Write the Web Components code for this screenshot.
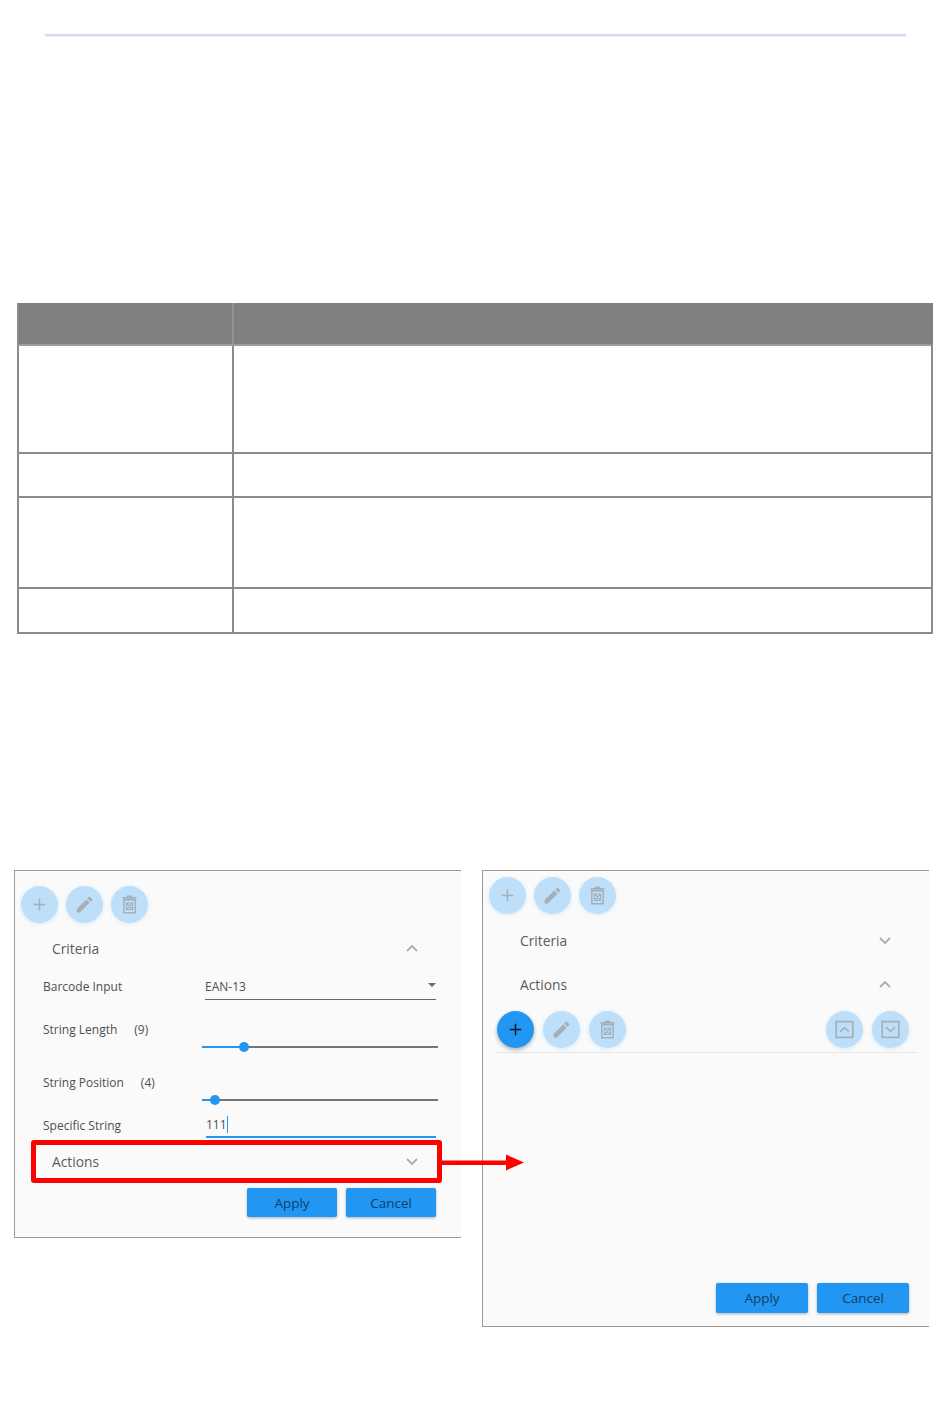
<!DOCTYPE html>
<html>
<head>
<meta charset="utf-8">
<style>
  html, body { margin: 0; background: #fff; }
  body { width: 950px; height: 1419px; overflow: hidden; font-family: "Open Sans", "Noto Sans", sans-serif; }
</style>
</head>
<body>
<page-rule></page-rule>
<spec-table rows="43,108,44,91,45"></spec-table>

<panel-gallery>
  <dialog-panel style="--panel-height: 367px; --panel-pad: 15px 25px 20px 6px">
    <icon-row>
      <round-button icon="plus"></round-button>
      <round-button icon="pencil"></round-button>
      <round-button icon="trash"></round-button>
    </icon-row>
    <section-header style="margin-top: 4px; --head-left: 31px; --chev-right: 18px" open>Criteria</section-header>
    <form-row label="Barcode Input"><select-field value="EAN-13"></select-field></form-row>
    <form-row label="String Length" note="(9)" tall><slider-bar value="17.8"></slider-bar></form-row>
    <form-row label="String Position" note="(4)" tall><slider-bar value="5.5"></slider-bar></form-row>
    <form-row label="Specific String" short><text-field value="111"></text-field></form-row>
    <section-header style="margin-top: 2px; --head-left: 31px; --chev-right: 18px">Actions</section-header>
    <button-bar style="margin-top: 5px; --btn-w: 90px; --btn-h: 29px">
      <action-button>Apply</action-button>
      <action-button>Cancel</action-button>
    </button-bar>
  </dialog-panel>

  <dialog-panel style="--panel-height: 456px; --panel-pad: 6px 20px 13px 6px">
    <icon-row>
      <round-button icon="plus"></round-button>
      <round-button icon="pencil"></round-button>
      <round-button icon="trash"></round-button>
    </icon-row>
    <section-header style="margin-top: 4px; --head-left: 31px; --chev-right: 18px">Criteria</section-header>
    <section-header style="--head-left: 31px; --chev-right: 18px" open>Actions</section-header>
    <action-toolbar>
      <round-button icon="plus" active></round-button>
      <round-button icon="pencil"></round-button>
      <round-button icon="trash"></round-button>
      <round-button icon="up" slot="end"></round-button>
      <round-button icon="down" slot="end"></round-button>
    </action-toolbar>
    <button-bar style="margin-top: auto; --btn-w: 92px; --btn-h: 30px">
      <action-button>Apply</action-button>
      <action-button>Cancel</action-button>
    </button-bar>
  </dialog-panel>

  <callout-box slot="overlay"></callout-box>
</panel-gallery>

<script>
const icons = {
  plus: `<path d="M12 5.5v13M5.5 12h13" fill="none" stroke="currentColor" stroke-width="1.7"/>`,
  pencil: `<path fill="currentColor" d="M3 17.25V21h3.75L17.81 9.94l-3.75-3.75L3 17.25zM20.71 7.04a1 1 0 0 0 0-1.41l-2.34-2.34a1 1 0 0 0-1.41 0l-1.83 1.83 3.75 3.75 1.83-1.83z"/>`,
  trash: `<g fill="none" stroke="currentColor" stroke-width="1.6"><path d="M5.5 6.5h13v15h-13z"/><path d="M4 4.4h16" stroke-width="2"/><path d="M9 2.6h6"/><path d="M8.4 10.2h7.2v7.6H8.4zM8.6 10.4l6.8 7.2M15.4 10.400l-6.800 7.200" stroke-width="1.2"/></g>`,
  up: `<g fill="none" stroke="currentColor" stroke-width="1.9"><path d="M2.500 3h19v18h-19z"/><path d="M7 14.500l5-4.500 5 4.500"/></g>`,
  down: `<g fill="none" stroke="currentColor" stroke-width="1.9"><path d="M2.500 3h19v18h-19z"/><path d="M7 9.500l5 4.500 5-4.500"/></g>`,
};

class PageRule extends HTMLElement {
  constructor() {
    super();
    this.attachShadow({ mode: "open" }).innerHTML = `
      <style>
        :host { display: block; height: 2px; margin: 34px 44px 0 45px; background: #d3dcee; border-bottom: 1px solid #e8edf7; }
      </style>`;
  }
}

class SpecTable extends HTMLElement {
  connectedCallback() {
    const rows = this.getAttribute("rows").split(",");
    const cells = rows.map((h, i) => `
      <div class="cell ${i === 0 ? "head" : ""}" style="height:${h}px"></div>
      <div class="cell ${i === 0 ? "head" : ""}" style="height:${h}px"></div>`).join("");
    this.attachShadow({ mode: "open" }).innerHTML = `
      <style>
        :host { display: block; width: 917px; margin: 266px 0 0 17px; }
        .grid { display: grid; grid-template-columns: 217px 699px; }
        .cell { box-sizing: border-box; border-bottom: 2px solid #8b8b8b; border-right: 2px solid #8b8b8b; }
        .cell:nth-child(odd) { border-left: 2px solid #8b8b8b; }
        .head { background: #808080; border-color: #9c9c9c; border-left-color: #808080; border-right-color: #808080; }
        .head:nth-child(1) { border-right-color: #939393; }
      </style>
      <div class="grid">${cells}</div>`;
  }
}

class PanelGallery extends HTMLElement {
  constructor() {
    super();
    this.attachShadow({ mode: "open" }).innerHTML = `
      <style>
        :host { display: flex; gap: 21px; align-items: flex-start; position: relative; margin: 236px 0 0 14px; }
      </style>
      <slot></slot><slot name="overlay"></slot>`;
  }
}

class DialogPanel extends HTMLElement {
  constructor() {
    super();
    this.attachShadow({ mode: "open" }).innerHTML = `
      <style>
        :host {
          display: flex; flex-direction: column; box-sizing: border-box;
          width: 447px; height: calc(var(--panel-height) + 1px); padding: var(--panel-pad);
          background: #fafafa; border: 1px solid #9a9a9a; border-right: none;
          font-family: "Open Sans", "Noto Sans", sans-serif; color: #4f4f4f;
        }
      </style>
      <slot></slot>`;
  }
}

class IconRow extends HTMLElement {
  constructor() {
    super();
    this.attachShadow({ mode: "open" }).innerHTML = `
      <style>:host { display: flex; gap: 8px; }</style>
      <slot></slot>`;
  }
}

class RoundButton extends HTMLElement {
  connectedCallback() {
    const icon = this.getAttribute("icon");
    this.attachShadow({ mode: "open" }).innerHTML = `
      <style>
        :host {
          display: flex; align-items: center; justify-content: center; flex: none;
          width: 37px; height: 37px; border-radius: 50%;
          background: #bddffa; color: #a4afb8;
          box-shadow: 0 1px 4px rgba(33,150,243,.16);
        }
        :host([active]) { background: #2196f3; color: #0b1a28; box-shadow: 0 2px 4px rgba(0,0,0,.3); }
        svg { width: 21px; height: 21px; }
      </style>
      <svg viewBox="0 0 24 24">${icons[icon]}</svg>`;
  }
}

class SectionHeader extends HTMLElement {
  connectedCallback() {
    const points = this.hasAttribute("open") ? "1,7 6,2 11,7" : "1,2 6,7 11,2";
    this.attachShadow({ mode: "open" }).innerHTML = `
      <style>
        :host {
          display: flex; align-items: center; justify-content: space-between; box-sizing: border-box;
          height: 44px; padding: 0 var(--chev-right) 0 var(--head-left);
          font-size: 13.800px; color: #5a5a5a;
        }
        svg { width: 12px; height: 9px; }
      </style>
      <slot></slot>
      <svg viewBox="0 0 12 9"><polyline points="${points}" fill="none" stroke="#ababab" stroke-width="1.8"/></svg>`;
  }
}

class FormRow extends HTMLElement {
  connectedCallback() {
    const note = this.getAttribute("note");
    this.attachShadow({ mode: "open" }).innerHTML = `
      <style>
        :host {
          display: grid; grid-template-columns: 159px 236px; box-sizing: border-box;
          height: 38px; padding-left: 22px;
          font-size: 12px; color: #4f4f4f;
        }
        :host([tall]) { height: 54px; }
        :host([short]) { height: 21px; }
        .label { display: flex; gap: 17px; padding-top: 8px; line-height: 16px; height: 16px; white-space: nowrap; }
        :host([tall]) .label { padding-top: 13px; }
        :host([short]) .label { padding-top: 2px; }
      </style>
      <div class="label"><span>${this.getAttribute("label")}</span>${note ? `<span>${note}</span>` : ""}</div>
      <div class="control"><slot></slot></div>`;
  }
}

class SelectField extends HTMLElement {
  connectedCallback() {
    this.attachShadow({ mode: "open" }).innerHTML = `
      <style>
        :host {
          display: flex; justify-content: space-between; box-sizing: border-box;
          width: 231px; height: 21px; margin: 8px 0 0 3px; line-height: 16px;
          border-bottom: 1px solid #666; font-size: 12px; color: #4f4f4f;
        }
        i { width: 0; height: 0; margin: 4px 0 0; border: 4px solid transparent; border-top-color: #666; border-bottom: none; }
      </style>
      <span>${this.getAttribute("value")}</span><i></i>`;
  }
}

class SliderBar extends HTMLElement {
  connectedCallback() {
    const value = this.getAttribute("value");
    this.attachShadow({ mode: "open" }).innerHTML = `
      <style>
        :host { display: block; position: relative; height: 2px; margin-top: 37px; background: #757575; }
        .fill { height: 2px; background: #2196f3; width: ${value}%; }
        .thumb { position: absolute; left: ${value}%; top: -4px; width: 10px; height: 10px; margin-left: -5px; border-radius: 50%; background: #2196f3; }
      </style>
      <div class="fill"></div><div class="thumb"></div>`;
  }
}

class TextField extends HTMLElement {
  connectedCallback() {
    this.attachShadow({ mode: "open" }).innerHTML = `
      <style>
        :host {
          display: block; box-sizing: border-box; width: 230px; height: 22px; margin: 0 0 0 4px; padding-top: 1px; line-height: 16px;
          border-bottom: 2px solid #2196f3; font-size: 12px; color: #4f4f4f;
        }
        span { border-right: 1px solid #2196f3; }
      </style>
      <span>${this.getAttribute("value")}</span>`;
  }
}

class ActionToolbar extends HTMLElement {
  constructor() {
    super();
    this.attachShadow({ mode: "open" }).innerHTML = `
      <style>
        :host {
          display: flex; justify-content: space-between; box-sizing: border-box;
          margin: 5px 0 0 7px; width: 422px; height: 42px; padding: 0 9px 0 1px;
          border-bottom: 1px solid #e6e6e6;
        }
        .group { display: flex; gap: 9px; height: 37px; }
      </style>
      <div class="group"><slot></slot></div>
      <div class="group"><slot name="end"></slot></div>`;
  }
}

class ButtonBar extends HTMLElement {
  constructor() {
    super();
    this.attachShadow({ mode: "open" }).innerHTML = `
      <style>:host { display: flex; justify-content: flex-end; gap: 9px; }</style>
      <slot></slot>`;
  }
}

class ActionButton extends HTMLElement {
  constructor() {
    super();
    this.attachShadow({ mode: "open" }).innerHTML = `
      <style>
        :host {
          display: flex; align-items: center; justify-content: center;
          width: var(--btn-w); height: var(--btn-h); border-radius: 2px;
          background: #2196f3; color: #123e66; font-size: 13.500px;
          box-shadow: 0 1px 3px rgba(0,0,0,.3);
        }
      </style>
      <slot></slot>`;
  }
}

class CalloutBox extends HTMLElement {
  constructor() {
    super();
    this.attachShadow({ mode: "open" }).innerHTML = `
      <style>
        :host { position: absolute; left: 17px; top: 270px; display: block; }
        .box { box-sizing: border-box; width: 411px; height: 43px; border: 5px solid #f00; border-radius: 3px; }
        svg { position: absolute; left: 411px; top: 0; width: 83px; height: 43px; }
      </style>
      <div class="box"></div>
      <svg viewBox="0 0 83 43"><path d="M0 20.500h64v-6l18 8-18 8v-5.500H0z" fill="#f00"/></svg>`;
  }
}

customElements.define("page-rule", PageRule);
customElements.define("spec-table", SpecTable);
customElements.define("panel-gallery", PanelGallery);
customElements.define("dialog-panel", DialogPanel);
customElements.define("icon-row", IconRow);
customElements.define("round-button", RoundButton);
customElements.define("section-header", SectionHeader);
customElements.define("form-row", FormRow);
customElements.define("select-field", SelectField);
customElements.define("slider-bar", SliderBar);
customElements.define("text-field", TextField);
customElements.define("action-toolbar", ActionToolbar);
customElements.define("button-bar", ButtonBar);
customElements.define("action-button", ActionButton);
customElements.define("callout-box", CalloutBox);
</script>
</body>
</html>
